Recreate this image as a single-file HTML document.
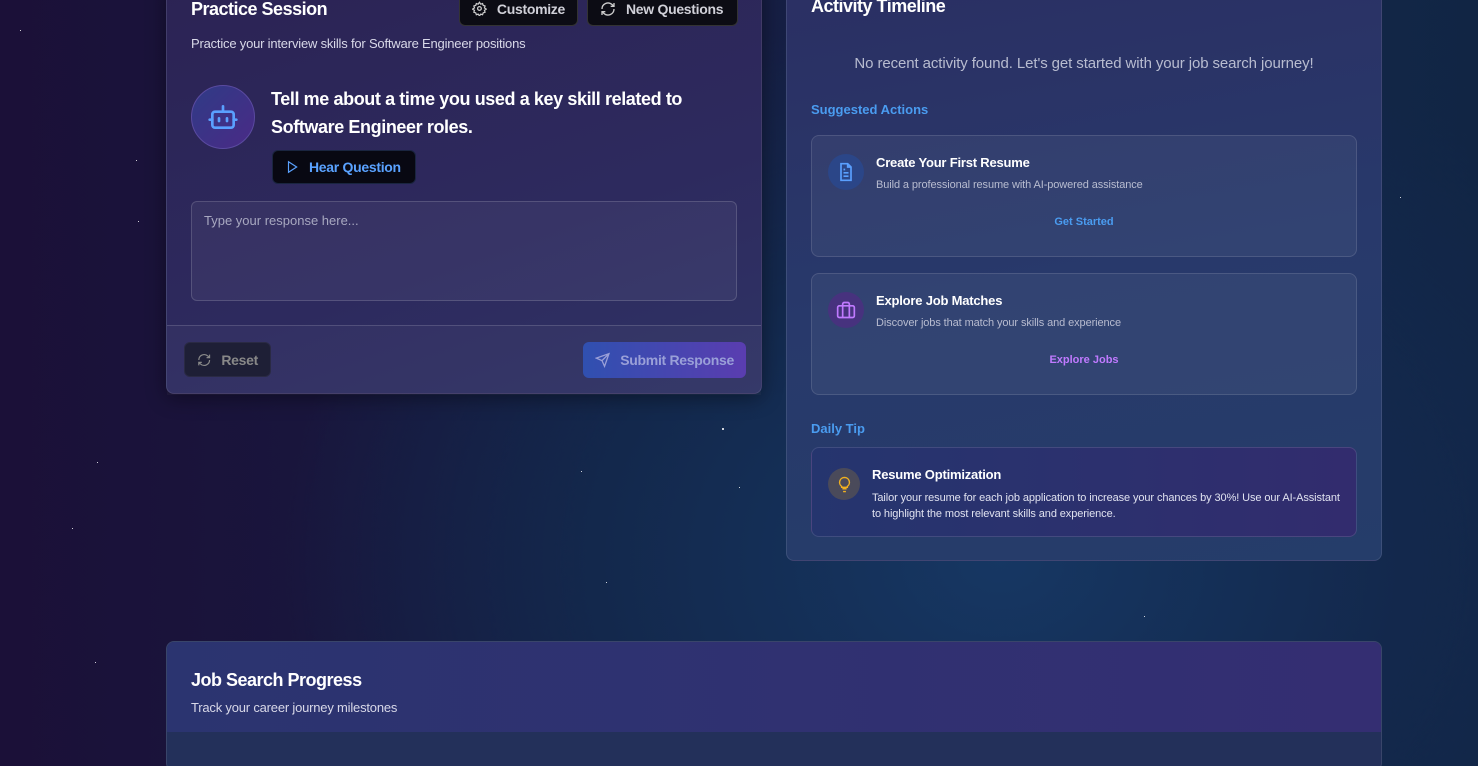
<!DOCTYPE html>
<html><head><meta charset="utf-8"><style>
*{box-sizing:border-box;margin:0;padding:0}
html{width:1478px;height:766px;overflow:hidden}
body{width:1478px;height:766px;overflow:hidden;font-family:"Liberation Sans",sans-serif;color:#fff;
background:radial-gradient(ellipse 900px 700px at 1000px 560px,#163763 0%,#13284c 45%,transparent 80%),linear-gradient(90deg,#1b1038 0%,#171a40 40%,#13284c 80%,#112544 100%);position:relative}
.star{position:absolute;width:1px;height:1px;background:#fff;opacity:.8}
.card{position:absolute;border-radius:8px;border:1px solid rgba(255,255,255,.1)}
.p{left:166px;top:-20px;width:596px;height:414px;background:linear-gradient(160deg,#2c2354 0%,#2d2a5e 60%,#2f3365 100%);box-shadow:0 4px 20px rgba(0,0,0,.4)}
.a{left:786px;top:-20px;width:596px;height:581px;background:linear-gradient(170deg,#2b2f63 0%,#28396b 50%,#253d6a 100%)}
.j{left:166px;top:641px;width:1216px;height:130px;background:#23305a;overflow:hidden}
.j .h{height:90px;background:linear-gradient(90deg,#2b3470,#342e72);padding:28px 24px}
h2{font-size:18px;font-weight:bold;letter-spacing:-.5px}
.sub{font-size:13px;color:#d8d8e8;letter-spacing:-.2px}
.btn{position:absolute;white-space:nowrap;background:#0c0c14;border:1px solid #333;border-radius:6px;font-size:14px;font-weight:bold;letter-spacing:-.3px;color:#d0d0d8;display:flex;align-items:center;gap:10px;padding:0 12px}
.sc{position:absolute;left:24px;width:546px;border:1px solid rgba(255,255,255,.12);border-radius:8px;background:rgba(255,255,255,.05)}
.ic{position:absolute;left:16px;width:36px;height:36px;border-radius:50%;display:flex;align-items:center;justify-content:center}
.t{position:absolute;left:64px;font-size:13px;font-weight:bold;letter-spacing:-.2px}
.d{position:absolute;left:64px;font-size:11px;color:#b8bcd0;letter-spacing:-.1px}
.l{position:absolute;width:100%;text-align:center;font-size:11px;font-weight:bold}
</style></head><body>
<div class="star" style="left:20px;top:30px"></div><div class="star" style="left:136px;top:160px"></div><div class="star" style="left:138px;top:221px"></div>
<div class="star" style="left:722px;top:428px;width:2px;height:2px"></div><div class="star" style="left:97px;top:462px"></div><div class="star" style="left:581px;top:471px"></div>
<div class="star" style="left:739px;top:487px"></div><div class="star" style="left:72px;top:528px"></div><div class="star" style="left:606px;top:582px"></div>
<div class="star" style="left:1144px;top:616px"></div><div class="star" style="left:95px;top:662px"></div><div class="star" style="left:1400px;top:197px"></div>

<div class="card p">
 <h2 style="position:absolute;left:24px;top:18px">Practice Session</h2>
 <div class="btn" style="left:292px;top:10px;height:35px;width:119px"><svg width="15" height="15" viewBox="0 0 24 24" fill="none" stroke="#ccc" stroke-width="2"><circle cx="12" cy="12" r="3"/><path d="M12 2l2 3 3-1 1 3 3 1-1 3 3 2-3 2 1 3-3 1-1 3-3-1-2 3-2-3-3 1-1-3-3-1 1-3-3-2 3-2-1-3 3-1 1-3 3 1z"/></svg>Customize</div>
 <div class="btn" style="left:420px;top:10px;height:35px;width:151px"><svg width="16" height="16" viewBox="0 0 24 24" fill="none" stroke="#ccc" stroke-width="2"><path d="M3 12a9 9 0 0115-6.7L21 8M21 3v5h-5M21 12a9 9 0 01-15 6.7L3 16M3 21v-5h5"/></svg>New Questions</div>
 <div class="sub" style="position:absolute;left:24px;top:55px">Practice your interview skills for Software Engineer positions</div>
 <div style="position:absolute;left:24px;top:104px;width:64px;height:64px;border-radius:50%;background:linear-gradient(135deg,#2f3b86,#4a2a86);border:1px solid #5a4aa0;display:flex;align-items:center;justify-content:center">
  <svg width="32" height="32" viewBox="0 0 24 24" fill="none" stroke="#5aa0ff" stroke-width="2" stroke-linecap="round"><path d="M12 8V4"/><rect x="4" y="8" width="16" height="12" rx="2"/><path d="M2 14h2M20 14h2M9 13v2M15 13v2"/></svg></div>
 <div style="position:absolute;left:104px;top:104px;font-size:18px;font-weight:bold;letter-spacing:-.4px;line-height:28px;width:440px">Tell me about a time you used a key skill related to Software Engineer roles.</div>
 <div class="btn" style="left:105px;top:169px;height:34px;width:144px;color:#5aa2ff;background:#080812;border-color:#1a2540"><svg width="14" height="14" viewBox="0 0 24 24" fill="none" stroke="#5aa2ff" stroke-width="2"><path d="M6 3l14 9-14 9z"/></svg>Hear Question</div>
 <div style="position:absolute;left:24px;top:220px;width:546px;height:100px;border:1px solid rgba(255,255,255,.15);border-radius:6px;background:rgba(255,255,255,.05);font-size:13px;color:#a8a8c0;padding:11px 12px">Type your response here...</div>
 <div style="position:absolute;left:0;top:344px;width:100%;height:70px;border-top:1px solid rgba(255,255,255,.15);background:rgba(255,255,255,.03)"></div>
 <div class="btn" style="left:17px;top:361px;height:35px;width:87px;background:#1e1f36;border-color:#2a2a44;color:#888">
 <svg width="16" height="16" viewBox="0 0 24 24" fill="none" stroke="#888" stroke-width="2"><path d="M3 12a9 9 0 0115-6.7L21 8M21 3v5h-5M21 12a9 9 0 01-15 6.7L3 16M3 21v-5h5"/></svg>Reset</div>
 <div class="btn" style="left:416px;top:361px;height:36px;width:163px;background:linear-gradient(90deg,#3050b0,#5a3db0);border:none;color:#9aa0d8;padding-left:12px"><svg width="16" height="16" viewBox="0 0 24 24" fill="none" stroke="#9aa0d8" stroke-width="2"><path d="M22 2L11 13M22 2l-7 20-4-9-9-4z"/></svg>Submit Response</div>
</div>

<div class="card a">
 <h2 style="position:absolute;left:24px;top:15px">Activity Timeline</h2>
 <div style="position:absolute;width:100%;text-align:center;top:74px;font-size:15px;color:#b8bcd0;letter-spacing:-.1px">No recent activity found. Let's get started with your job search journey!</div>
 <div style="position:absolute;left:24px;top:121px;font-size:13px;font-weight:bold;color:#4a9cf0">Suggested Actions</div>
 <div class="sc" style="top:154px;height:122px">
  <div class="ic" style="top:18px;background:#2b4688"><svg width="20" height="20" viewBox="0 0 24 24" fill="none" stroke="#5aa0ff" stroke-width="2"><path d="M14 2H6v20h12V6z M14 2v4h4M9 13h6M9 17h6M9 9h2"/></svg></div>
  <div class="t" style="top:19px">Create Your First Resume</div>
  <div class="d" style="top:43px">Build a professional resume with AI-powered assistance</div>
  <div class="l" style="top:80px;color:#4a9cf0">Get Started</div>
 </div>
 <div class="sc" style="top:292px;height:122px">
  <div class="ic" style="top:18px;background:#47327e"><svg width="20" height="20" viewBox="0 0 24 24" fill="none" stroke="#c07aff" stroke-width="2"><rect x="2" y="7" width="20" height="14" rx="2"/><path d="M16 21V5a2 2 0 00-2-2h-4a2 2 0 00-2 2v16"/></svg></div>
  <div class="t" style="top:19px">Explore Job Matches</div>
  <div class="d" style="top:43px">Discover jobs that match your skills and experience</div>
  <div class="l" style="top:80px;color:#c07aff">Explore Jobs</div>
 </div>
 <div style="position:absolute;left:24px;top:440px;font-size:13px;font-weight:bold;color:#4a9cf0">Daily Tip</div>
 <div class="sc" style="top:466px;height:90px;background:linear-gradient(90deg,#25356e,#322c6e)">
  <div class="ic" style="top:20px;width:32px;height:32px;background:#4a4a5a"><svg width="17" height="17" viewBox="0 0 24 24" fill="none" stroke="#f0b020" stroke-width="2"><path d="M9 18h6M10 22h4M12 2a7 7 0 00-4 12.7V16h8v-1.3A7 7 0 0012 2z"/></svg></div>
  <div class="t" style="left:60px;top:19px">Resume Optimization</div>
  <div class="d" style="left:60px;top:42px;color:#e0e2f0;line-height:16px;width:475px">Tailor your resume for each job application to increase your chances by 30%! Use our AI-Assistant to highlight the most relevant skills and experience.</div>
 </div>
</div>

<div class="card j"><div class="h"><h2>Job Search Progress</h2><div class="sub" style="margin-top:9px">Track your career journey milestones</div></div></div>
</body></html>
